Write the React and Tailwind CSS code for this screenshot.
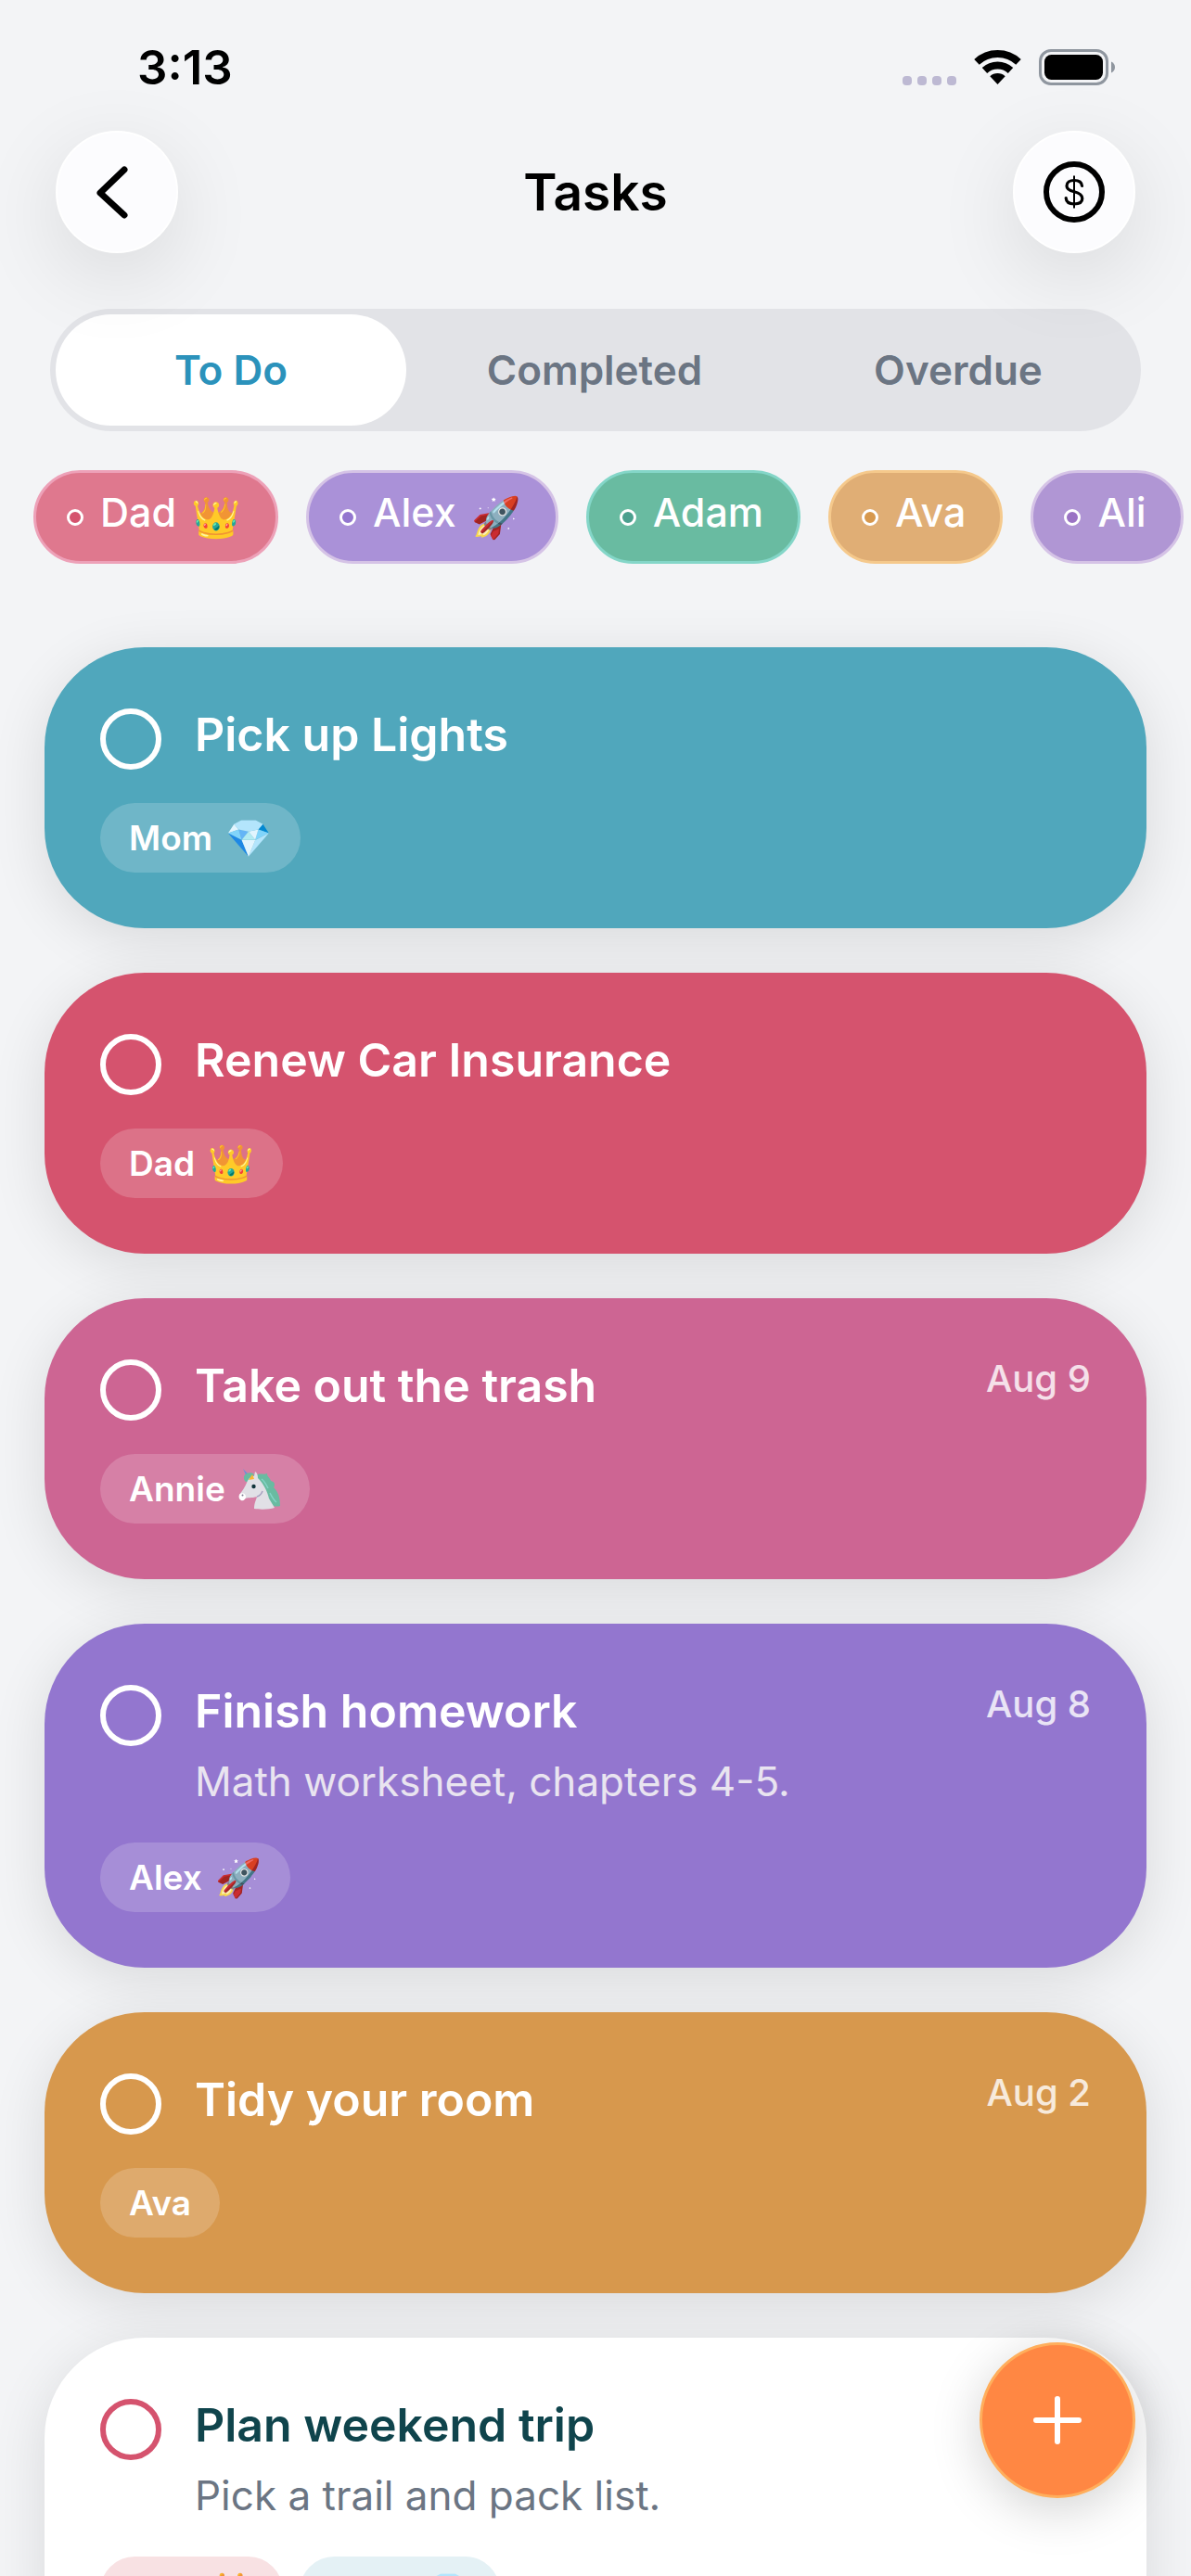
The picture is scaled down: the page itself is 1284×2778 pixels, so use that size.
const people = {
  dad: { name: "Dad", emoji: "👑", tint: "bg-[#f8e1e3] text-[#d5536e]", filter: "bg-[#df788e] border-[#eda1b8]", dot: "bg-[#d5536e]" },
  mom: { name: "Mom", emoji: "💎", tint: "bg-[#e4f1f5] text-[#50a7bc]" },
  annie: { name: "Annie", emoji: "🦄" },
  alex: { name: "Alex", emoji: "🚀", filter: "bg-[#aa91d8] border-[#d5c3e6]", dot: "bg-[#9376cf]" },
  adam: { name: "Adam", filter: "bg-[#69bba1] border-[#84d6c8]", dot: "bg-[#4ba08e]" },
  ava: { name: "Ava", filter: "bg-[#e0ae75] border-[#f5c98c]", dot: "bg-[#d7984d]" },
  ali: { name: "Ali", filter: "bg-[#b096d4] border-[#d5c3e6]", dot: "bg-[#9b73c4]" },
};

const tabs = ["To Do", "Completed", "Overdue"];

const filters = [people.dad, people.alex, people.adam, people.ava, people.ali];

const tasks = [
  { id: 1, title: "Pick up Lights", color: "bg-[#50a7bc]", assignees: [people.mom] },
  { id: 2, title: "Renew Car Insurance", color: "bg-[#d5536e]", assignees: [people.dad] },
  { id: 3, title: "Take out the trash", due: "Aug 9", color: "bg-[#cd6593]", assignees: [people.annie] },
  {
    id: 4,
    title: "Finish homework",
    note: "Math worksheet, chapters 4-5.",
    due: "Aug 8",
    color: "bg-[#9376cf]",
    assignees: [people.alex],
  },
  { id: 5, title: "Tidy your room", due: "Aug 2", color: "bg-[#d7984d]", assignees: [people.ava] },
  {
    id: 6,
    title: "Plan weekend trip",
    note: "Pick a trail and pack list.",
    shared: true,
    assignees: [people.dad, people.mom],
  },
];

function WifiIcon() {
  return (
    <svg width="51" height="37" viewBox="0 0 51 37" fill="none" aria-label="Wi-Fi">
      <path d="M3 12.9A33 33 0 0 1 48 12.9" stroke="#000" strokeWidth="8" />
      <path d="M11.5 22A20.5 20.5 0 0 1 39.5 22" stroke="#000" strokeWidth="8" />
      <path d="M25.5 37L17.3 28.2A12 12 0 0 1 33.7 28.2Z" fill="#000" />
    </svg>
  );
}

function BatteryIcon() {
  return (
    <svg width="82" height="39" viewBox="0 0 82 39" fill="none" aria-label="Battery full">
      <rect x="1.5" y="1.5" width="72" height="36" rx="11.5" stroke="#8f969f" strokeWidth="3" />
      <rect x="6" y="6" width="63" height="27" rx="7.5" fill="#000" />
      <path d="M78 13.5C80.6 14.6 82 16.8 82 19.5S80.6 24.4 78 25.5Z" fill="#8f969f" />
    </svg>
  );
}

function BackIcon() {
  return (
    <svg width="66" height="66" viewBox="0 0 66 66" fill="none" aria-hidden="true">
      <path d="M41 9L15 34L41 58" stroke="#000" strokeWidth="7" strokeLinecap="round" strokeLinejoin="round" />
    </svg>
  );
}

function CoinIcon() {
  return (
    <svg width="66" height="66" viewBox="0 0 66 66" fill="none" stroke="#000" aria-hidden="true">
      <circle cx="33" cy="33" r="30" strokeWidth="6" />
      <path
        d="M41.5 26.5C41.2 22.5 37.8 20.5 33 20.5C28.2 20.5 25 22.9 25 26.4C25 30 27.8 31.5 33 32.7C38.5 34 41.8 35.8 41.8 40C41.8 43.9 38.3 46 33 46C27.8 46 24.5 43.6 24.2 39.7"
        strokeWidth="3.2"
        strokeLinecap="round"
      />
      <path d="M33 15.5V50.5" strokeWidth="2" />
    </svg>
  );
}

function UnicornIcon() {
  return (
    <svg width="46" height="46" viewBox="0 0 46 46" aria-hidden="true">
      <path d="M5 1L13 9L10 12Z" fill="#6f8fd6" />
      <path d="M6 9C8 5 14 4 17 7L14 14C10 17 5 15 6 9Z" fill="#69bba1" />
      <path d="M19 8C23 5 27 8 31 6C31 10 34 10 35 14C39 15 40 18 38 21C43 26 45 32 45 41C39 43 33 40 31 33L20 18Z" fill="#69bba1" />
      <path d="M18 4C20 5 21 8 21 11C27 17 31 25 33 33L39 43C33 45 23 45 17 44C17 38 19 35 20 31C14 33 10 31 6 34C3 36 0 33 1 29C4 25 7 21 9 16C11 11 14 9 17 9Z" fill="#e1e0e6" />
      <path d="M1 29C3 26 8 27 8 31C8 34 5 36 3 35C1 34 0 32 1 29Z" fill="#fff" />
      <path d="M20 31C23 30 25 28 26 25" fill="none" stroke="#a5a0bf" strokeWidth="1.5" />
      <path d="M11 13L15 7L17 12Z" fill="#fdb833" />
      <path d="M25 12C28 14 30 18 32 22M34 27C36 31 38 35 41 37" fill="none" stroke="#84d6c8" strokeWidth="1.5" />
      <circle cx="16.5" cy="20" r="2.2" fill="#12343b" />
      <circle cx="4.5" cy="29.5" r="1" fill="#7b7890" />
    </svg>
  );
}

function StatusBar() {
  return (
    <div className="flex h-[141px] items-center justify-between pt-1 pr-[82px] pl-[148px]">
      <span className="text-[51px] leading-none font-semibold">3:13</span>
      <div className="flex items-center gap-[19px]">
        <div className="flex gap-[6px] self-end" aria-label="No signal">
          <span className="size-[10px] rounded-[4px] bg-[#bdb9d3]" />
          <span className="size-[10px] rounded-[4px] bg-[#bdb9d3]" />
          <span className="size-[10px] rounded-[4px] bg-[#bdb9d3]" />
          <span className="size-[10px] rounded-[4px] bg-[#bdb9d3]" />
        </div>
        <WifiIcon />
        <BatteryIcon />
      </div>
    </div>
  );
}

function RoundButton({ label, children }) {
  return (
    <button
      type="button"
      aria-label={label}
      className="flex size-[132px] items-center justify-center rounded-full border-2 border-white bg-[#fcfcfe] shadow-[0_24px_90px_rgba(0,0,0,0.11)]"
    >
      {children}
    </button>
  );
}

function FilterChip({ person }) {
  return (
    <button
      type="button"
      className={`flex h-[101px] shrink-0 items-center rounded-full border-3 pr-[37px] pl-[33px] text-[43px] leading-none font-medium text-white ${person.filter}`}
    >
      <span className={`mr-[18px] size-[18px] rounded-full border-3 border-white ${person.dot}`} />
      <span className="pb-[10px]">{person.name}</span>
      {person.emoji && <span className="ml-4">{person.emoji}</span>}
    </button>
  );
}

function AssigneeChip({ person, shared }) {
  return (
    <li
      className={`flex h-[75px] items-center gap-[14px] rounded-full px-[31px] text-[37px] leading-none font-semibold ${
        shared ? person.tint : "bg-white/18 text-white"
      }`}
    >
      {person.name}
      {person.emoji === "🦄" ? <UnicornIcon /> : person.emoji && <span className="text-[40px]">{person.emoji}</span>}
    </li>
  );
}

function TaskCard({ task }) {
  const { id, title, note, due, color, shared, assignees } = task;
  return (
    <li
      className={`flex flex-col gap-9 rounded-[108px] p-[60px] shadow-[0_12px_60px_rgba(0,0,0,0.11)] ${
        shared ? "bg-white text-[#0f444c]" : `${color} text-white`
      }`}
    >
      <div className="flex items-start">
        <input
          id={`task-${id}`}
          type="checkbox"
          className={`mt-[6px] mr-9 size-[66px] shrink-0 appearance-none rounded-full border-6 ${
            shared ? "border-[#d5536e]" : "border-white"
          }`}
        />
        <div className="flex grow flex-col gap-3">
          <label htmlFor={`task-${id}`} className="text-[50px] leading-[68px] font-semibold">
            {title}
          </label>
          {note && (
            <p className={`text-[44px] leading-[60px] ${shared ? "text-[#6b7583]" : "text-[#e9e4f0]"}`}>{note}</p>
          )}
        </div>
        {due && <time className="text-[40px] leading-[54px] font-medium text-white/80">{due}</time>}
      </div>
      <ul className="flex gap-[18px]">
        {assignees.map((person) => (
          <AssigneeChip key={person.name} person={person} shared={shared} />
        ))}
      </ul>
    </li>
  );
}

export default function App() {
  return (
    <div className="h-dvh overflow-hidden bg-[#f3f4f6] font-['Inter',sans-serif] text-black">
      <StatusBar />

      <header className="relative z-10 flex items-center justify-between px-[60px]">
        <RoundButton label="Back">
          <BackIcon />
        </RoundButton>
        <h1 className="text-[55px] leading-none font-semibold">Tasks</h1>
        <RoundButton label="Rewards">
          <CoinIcon />
        </RoundButton>
      </header>

      <div role="tablist" className="mx-[54px] mt-[60px] grid h-[132px] grid-cols-3 rounded-full bg-[#e2e3e7]">
        {tabs.map((tab, i) => (
          <button
            key={tab}
            type="button"
            role="tab"
            aria-selected={i === 0}
            className={`my-[6px] mr-2 ml-[6px] rounded-full text-[44px] leading-none font-semibold ${
              i === 0 ? "bg-white text-[#2b92bb]" : "text-[#6b7583]"
            }`}
          >
            {tab}
          </button>
        ))}
      </div>

      {/* Family member filters, scrolls sideways */}
      <div className="mt-[42px] flex gap-[30px] overflow-x-auto pl-9 [scrollbar-width:none]">
        {filters.map((person) => (
          <FilterChip key={person.name} person={person} />
        ))}
      </div>

      <ul className="mt-[90px] flex flex-col gap-12 px-12">
        {tasks.map((task) => (
          <TaskCard key={task.id} task={task} />
        ))}
      </ul>

      <button
        type="button"
        aria-label="Add task"
        className="fixed right-[60px] bottom-[84px] z-20 flex size-[168px] items-center justify-center rounded-full border-3 border-[#ffae5c] bg-[#ff8743] shadow-[0_12px_54px_rgba(0,0,0,0.18)]"
      >
        <svg width="52" height="52" viewBox="0 0 52 52" stroke="#fff" strokeWidth="6" strokeLinecap="round" aria-hidden="true">
          <path d="M26 3V49M3 26H49" />
        </svg>
      </button>
    </div>
  );
}
